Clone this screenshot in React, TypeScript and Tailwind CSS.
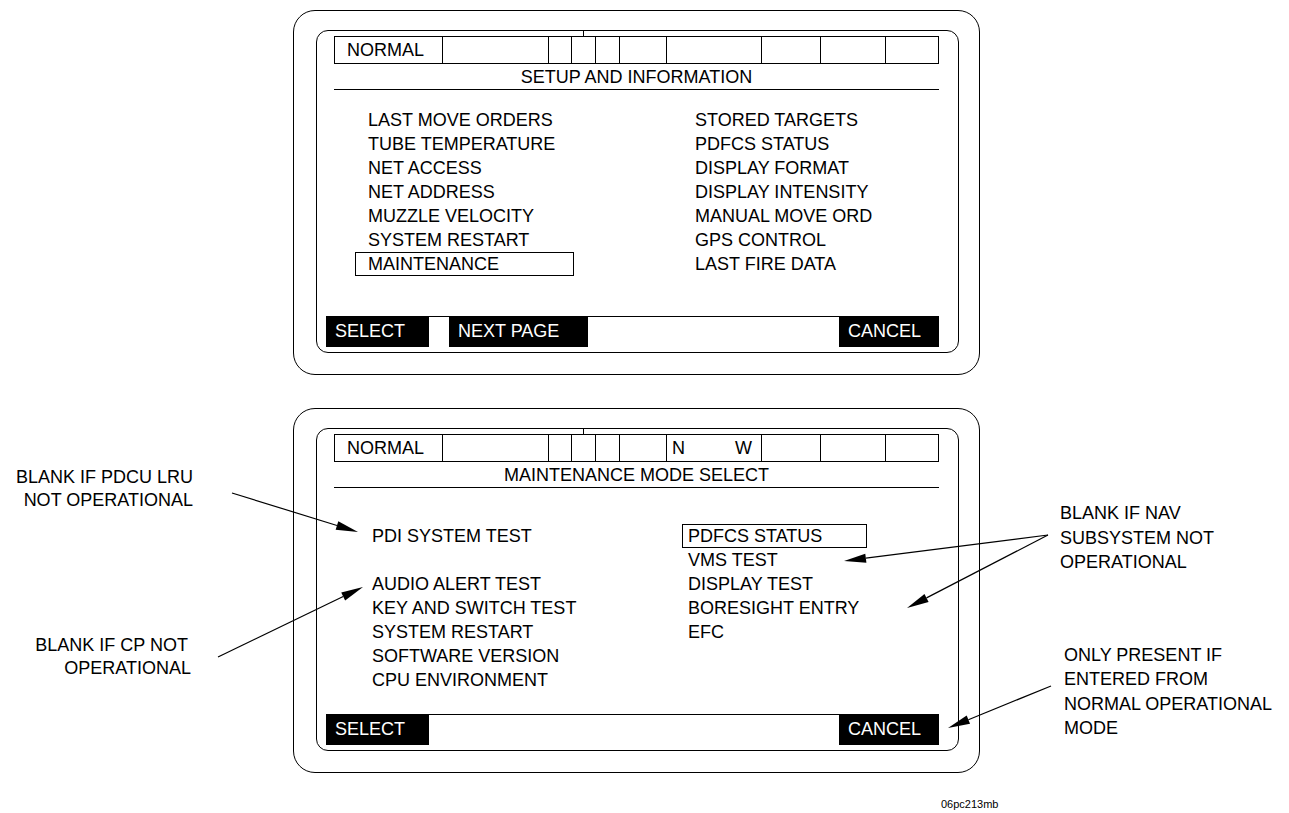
import React from "react";

type Btn = { label: string; width: string; gap?: string };

const topLeft = [
  "LAST MOVE ORDERS",
  "TUBE TEMPERATURE",
  "NET ACCESS",
  "NET ADDRESS",
  "MUZZLE VELOCITY",
  "SYSTEM RESTART",
  "MAINTENANCE",
];

const topRight = [
  "STORED TARGETS",
  "PDFCS STATUS",
  "DISPLAY FORMAT",
  "DISPLAY INTENSITY",
  "MANUAL MOVE ORD",
  "GPS CONTROL",
  "LAST FIRE DATA",
];

const maintLeft = [
  "PDI SYSTEM TEST",
  "",
  "AUDIO ALERT TEST",
  "KEY AND SWITCH TEST",
  "SYSTEM RESTART",
  "SOFTWARE VERSION",
  "CPU ENVIRONMENT",
];

const maintRight = ["PDFCS STATUS", "VMS TEST", "DISPLAY TEST", "BORESIGHT ENTRY", "EFC"];

function HeaderRow({ nav }: { nav?: boolean }) {
  return (
    <div className="flex h-[28px] border border-black">
      <div className="flex w-[107px] items-center pl-[12px]">NORMAL</div>
      <div className="w-[106px] border-l border-black" />
      <div className="w-[23px] border-l border-black" />
      <div className="w-[24px] border-l border-black" />
      <div className="w-[24px] border-l border-black" />
      <div className="w-[47px] border-l border-black" />
      <div className="flex w-[95px] items-center justify-between border-l border-black pl-[5px] pr-[9px]">
        {nav && (
          <>
            <span>N</span>
            <span>W</span>
          </>
        )}
      </div>
      <div className="w-[59px] border-l border-black" />
      <div className="w-[65px] border-l border-black" />
      <div className="flex-1 border-l border-black" />
    </div>
  );
}

function SoftKeys({ keys }: { keys: Btn[] }) {
  return (
    <div className="-ml-[8px] mb-[5px] mt-auto flex h-[31px] border-t border-black">
      {keys.map((k) => (
        <div
          key={k.label}
          className={`-mt-px h-[31px] bg-black pl-[9px] leading-[31px] text-white ${k.width} ${k.gap ?? ""}`}
        >
          {k.label}
        </div>
      ))}
      <div className="-mt-px ml-auto h-[31px] w-[100px] bg-black pl-[9px] leading-[31px] text-white">
        CANCEL
      </div>
    </div>
  );
}

function Screen({
  title,
  nav,
  children,
  keys,
}: {
  title: string;
  nav?: boolean;
  children: React.ReactNode;
  keys: Btn[];
}) {
  return (
    <div className="h-[365px] w-[687px] rounded-[22px] border-[1.5px] border-black pl-[22px] pt-[19px]">
      <div className="flex h-[323px] w-[643px] flex-col rounded-[12px] border border-black pl-[17px] pr-[19px]">
        <div className="flex h-[5px]">
          <div className="ml-[249px] h-[5px] w-px bg-black" />
        </div>
        <HeaderRow nav={nav} />
        <div className="flex h-[26px] items-center justify-center border-b border-black pt-[2px]">
          {title}
        </div>
        {children}
        <SoftKeys keys={keys} />
      </div>
    </div>
  );
}

function Arrow({ x1, y1, x2, y2 }: { x1: number; y1: number; x2: number; y2: number }) {
  const dx = x2 - x1;
  const dy = y2 - y1;
  const len = Math.hypot(dx, dy);
  const ux = dx / len;
  const uy = dy / len;
  const hl = 22;
  const hw = 4.5;
  const bx = x2 - ux * hl;
  const by = y2 - uy * hl;
  const pts = `${x2},${y2} ${bx - uy * hw},${by + ux * hw} ${bx + uy * hw},${by - ux * hw}`;
  return (
    <g>
      <line x1={x1} y1={y1} x2={bx} y2={by} stroke="black" strokeWidth={1.2} />
      <polygon points={pts} fill="black" />
    </g>
  );
}

export default function App() {
  return (
    <div className="relative flex h-[813px] w-[1289px] overflow-hidden bg-white text-[18px] text-black [font-family:'Liberation_Sans',Arial,sans-serif]">
      <aside className="w-[293px] shrink-0 text-right leading-[23px]">
        <div className="mt-[466px] pr-[100px]">
          <div>BLANK IF PDCU LRU</div>
          <div>NOT OPERATIONAL</div>
        </div>
        <div className="mt-[122px] pr-[105px]">
          <div>BLANK IF CP NOT</div>
          <div className="-mr-[3px]">OPERATIONAL</div>
        </div>
      </aside>

      <main className="flex w-[687px] shrink-0 flex-col pt-[10px]">
        <Screen
          title="SETUP AND INFORMATION"
          keys={[
            { label: "SELECT", width: "w-[103px]" },
            { label: "NEXT PAGE", width: "w-[139px]", gap: "ml-[20px]" },
          ]}
        >
          <div className="flex pl-[34px] pt-[18px] leading-[24px]">
            <div className="w-[327px]">
              {topLeft.map((t) =>
                t === "MAINTENANCE" ? (
                  <div key={t} className="-ml-[13px] w-[219px] border border-black pl-[12px] leading-[22px]">
                    {t}
                  </div>
                ) : (
                  <div key={t}>{t}</div>
                )
              )}
            </div>
            <div>
              {topRight.map((t) => (
                <div key={t}>{t}</div>
              ))}
            </div>
          </div>
        </Screen>

        <div className="mt-[33px]">
          <Screen title="MAINTENANCE MODE SELECT" nav keys={[{ label: "SELECT", width: "w-[103px]" }]}>
            <div className="flex pl-[38px] pt-[36px] leading-[24px]">
              <div className="w-[316px]">
                {maintLeft.map((t, i) => (
                  <div key={i} className="h-[24px]">
                    {t}
                  </div>
                ))}
              </div>
              <div>
                {maintRight.map((t) =>
                  t === "PDFCS STATUS" ? (
                    <div key={t} className="-ml-[6px] w-[185px] border border-black pl-[5px] leading-[22px]">
                      {t}
                    </div>
                  ) : (
                    <div key={t}>{t}</div>
                  )
                )}
              </div>
            </div>
          </Screen>
        </div>

        <div className="mt-[24px] pl-[648px] text-[11px] leading-[14px]">06pc213mb</div>
      </main>

      <aside className="flex-1 leading-[24.5px]">
        <div className="mt-[501px] pl-[80px]">
          <div>BLANK IF NAV</div>
          <div>SUBSYSTEM NOT</div>
          <div>OPERATIONAL</div>
        </div>
        <div className="mt-[68px] pl-[84px]">
          <div>ONLY PRESENT IF</div>
          <div>ENTERED FROM</div>
          <div>NORMAL OPERATIONAL</div>
          <div>MODE</div>
        </div>
      </aside>

      <svg className="pointer-events-none absolute inset-0" width={1289} height={813}>
        <Arrow x1={232} y1={493} x2={358} y2={532} />
        <Arrow x1={218} y1={657} x2={363} y2={587} />
        <Arrow x1={1048} y1={535} x2={844} y2={561} />
        <Arrow x1={1048} y1={535} x2={907} y2={608} />
        <Arrow x1={1051} y1={686} x2={948} y2={728} />
      </svg>
    </div>
  );
}
